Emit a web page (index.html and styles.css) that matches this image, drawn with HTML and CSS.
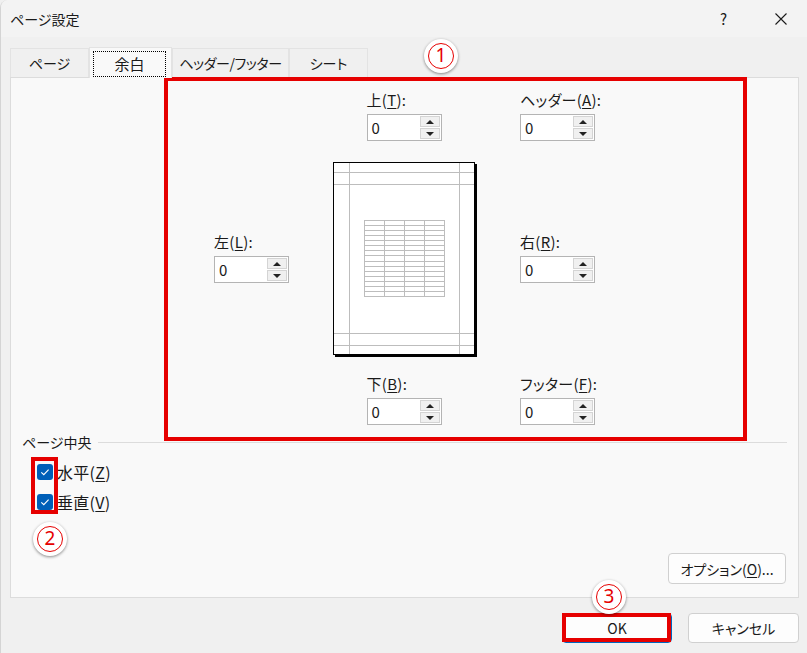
FILE: index.html
```html
<!DOCTYPE html>
<html lang="ja">
<head>
<meta charset="utf-8">
<title>ページ設定</title>
<link rel="stylesheet" href="styles.css">
</head>
<body>
<div class="window">
  <div class="titlebar">
    <span class="title">ページ設定</span>
    <span class="help">?</span>
    <span class="close"><svg width="12" height="12" viewBox="0 0 12 12"><path d="M0.5 0.5 L11.5 11.5 M11.5 0.5 L0.5 11.5" stroke="#1a1a1a" stroke-width="1.1" fill="none"/></svg></span>
  </div>
  <div class="tabs">
    <div class="tab w79">ページ</div>
    <div class="tab active"><span class="focus">余白</span></div>
    <div class="tab w117">ヘッダー/フッター</div>
    <div class="tab w79">シート</div>
  </div>
  <div class="panel">
    <div class="margins">
      <div class="field c2 r1">
        <div class="flabel">上(<u>T</u>):</div>
        <div class="spin"><span class="val">0</span><span class="btns"><span class="sb"><i class="up"></i></span><span class="sb"><i class="down"></i></span></span></div>
      </div>
      <div class="field c4 r1">
        <div class="flabel">ヘッダー(<u>A</u>):</div>
        <div class="spin"><span class="val">0</span><span class="btns"><span class="sb"><i class="up"></i></span><span class="sb"><i class="down"></i></span></span></div>
      </div>
      <div class="field c1 r2 mid">
        <div class="flabel">左(<u>L</u>):</div>
        <div class="spin"><span class="val">0</span><span class="btns"><span class="sb"><i class="up"></i></span><span class="sb"><i class="down"></i></span></span></div>
      </div>
      <svg class="preview" width="144" height="195" viewBox="0 0 144 195">
        <rect x="2" y="2" width="142" height="193" fill="#000"/>
        <rect x="0.5" y="0.5" width="141" height="192" fill="#fff" stroke="#000"/>
        <g stroke="#bdbdbd" fill="none" stroke-width="1">
          <line x1="16.5" y1="1" x2="16.5" y2="192"/>
          <line x1="126.5" y1="1" x2="126.5" y2="192"/>
          <line x1="1" y1="10.5" x2="141" y2="10.5"/>
          <line x1="1" y1="22.5" x2="141" y2="22.5"/>
          <line x1="1" y1="171.5" x2="141" y2="171.5"/>
          <line x1="1" y1="183.5" x2="141" y2="183.5"/>
          <rect x="31.5" y="58.5" width="80" height="76"/>
          <line x1="51.5" y1="58.5" x2="51.5" y2="134.5"/>
          <line x1="71.5" y1="58.5" x2="71.5" y2="134.5"/>
          <line x1="91.5" y1="58.5" x2="91.5" y2="134.5"/>
          <line x1="31.5" y1="63.5" x2="111.5" y2="63.5"/>
          <line x1="31.5" y1="68.5" x2="111.5" y2="68.5"/>
          <line x1="31.5" y1="73.5" x2="111.5" y2="73.5"/>
          <line x1="31.5" y1="78.5" x2="111.5" y2="78.5"/>
          <line x1="31.5" y1="83.5" x2="111.5" y2="83.5"/>
          <line x1="31.5" y1="88.5" x2="111.5" y2="88.5"/>
          <line x1="31.5" y1="93.5" x2="111.5" y2="93.5"/>
          <line x1="31.5" y1="99.5" x2="111.5" y2="99.5"/>
          <line x1="31.5" y1="104.5" x2="111.5" y2="104.5"/>
          <line x1="31.5" y1="109.5" x2="111.5" y2="109.5"/>
          <line x1="31.5" y1="114.5" x2="111.5" y2="114.5"/>
          <line x1="31.5" y1="119.5" x2="111.5" y2="119.5"/>
          <line x1="31.5" y1="124.5" x2="111.5" y2="124.5"/>
          <line x1="31.5" y1="129.5" x2="111.5" y2="129.5"/>
        </g>
      </svg>
      <div class="field c4 r2 mid">
        <div class="flabel">右(<u>R</u>):</div>
        <div class="spin"><span class="val">0</span><span class="btns"><span class="sb"><i class="up"></i></span><span class="sb"><i class="down"></i></span></span></div>
      </div>
      <div class="field c2 r3">
        <div class="flabel">下(<u>B</u>):</div>
        <div class="spin"><span class="val">0</span><span class="btns"><span class="sb"><i class="up"></i></span><span class="sb"><i class="down"></i></span></span></div>
      </div>
      <div class="field c4 r3">
        <div class="flabel">フッター(<u>F</u>):</div>
        <div class="spin"><span class="val">0</span><span class="btns"><span class="sb"><i class="up"></i></span><span class="sb"><i class="down"></i></span></span></div>
      </div>
    </div>
    <div class="group">
      <div class="group-head"><span>ページ中央</span><span class="rule"></span></div>
      <div class="check"><span class="box"><svg width="16" height="16" viewBox="0 0 16 16"><rect width="16" height="16" rx="3" fill="#005fb8"/><path d="M4.3 8.3 L6.8 10.7 L11.6 5.6" stroke="#fff" stroke-width="1.1" fill="none"/></svg></span><span>水平(<u>Z</u>)</span></div>
      <div class="check"><span class="box"><svg width="16" height="16" viewBox="0 0 16 16"><rect width="16" height="16" rx="3" fill="#005fb8"/><path d="M4.3 8.3 L6.8 10.7 L11.6 5.6" stroke="#fff" stroke-width="1.1" fill="none"/></svg></span><span>垂直(<u>V</u>)</span></div>
    </div>
    <div class="options-row"><button class="btn options">オプション(<u>O</u>)...</button></div>
  </div>
  <div class="footer">
    <button class="btn default">OK</button>
    <button class="btn cancel">キャンセル</button>
  </div>

  <div class="mark box1"></div>
  <div class="mark box2"></div>
  <div class="mark box3"></div>
  <div class="num n1"><span>1</span></div>
  <div class="num n2"><span>2</span></div>
  <div class="num n3"><span>3</span></div>
</div>
</body>
</html>
```

FILE: styles.css
```css
* { box-sizing: border-box; }
html, body { margin: 0; padding: 0; }
body {
  background: #f0f0f0;
  font-family: "Noto Sans CJK JP", "Noto Sans", sans-serif;
  font-feature-settings: "palt";
  color: #1a1a1a;
}
.window {
  position: relative;
  width: 807px;
  height: 653px;
  background: #f0f0f0;
  overflow: hidden;
  border-left: 1px solid #d4d4d4;
  border-top-left-radius: 8px;
}
.titlebar {
  height: 37px;
  background: #f3f3f3;
  display: flex;
  align-items: center;
  padding-left: 9px;
  font-size: 14px;
}
.title { flex: 1; line-height: 20px; }
.help { font-size: 15px; line-height: 20px; margin-right: 48px; }
.close { display: flex; width: 12px; height: 12px; margin-right: 20px; }

.tabs {
  height: 40px;
  display: flex;
  align-items: flex-end;
  margin-left: 9px;
  position: relative;
  z-index: 1;
}
.tab {
  height: 29px;
  border: 1px solid #e3e3e3;
  border-bottom: none;
  background: #f0f0f0;
  display: flex;
  align-items: center;
  justify-content: center;
  font-size: 14px;
  line-height: 20px;
}
.w79 { width: 79px; }
.w117 { width: 117px; letter-spacing: -0.4px; }
.tab.active {
  width: 83px;
  height: 31px;
  margin-bottom: -1px;
  background: #f9f9f9;
  padding: 3px 5px 1px 3px;
}
.focus {
  flex: 1;
  align-self: stretch;
  border: 1px dotted #000;
  display: flex;
  align-items: center;
  justify-content: center;
  font-size: 15px;
}

.panel {
  margin-left: 9px;
  width: 789px;
  height: 521px;
  background: #f9f9f9;
  border: 1px solid #dcdcdc;
  display: flex;
  flex-direction: column;
}
.margins {
  display: grid;
  grid-template-columns: 119px 142px 45px 75px;
  margin-left: 203px;
  margin-top: 12px;
}
.c1 { grid-column: 1; }
.c2 { grid-column: 2; justify-self: center; }
.c4 { grid-column: 4; }
.r1 { grid-row: 1; }
.r2 { grid-row: 2; }
.r3 { grid-row: 3; }
.mid { align-self: center; }
.preview {
  grid-column: 2;
  grid-row: 2;
  display: block;
  margin: 21px 0 17px 0;
}
.field { width: 75px; }
.flabel {
  font-size: 15px;
  line-height: 20px;
  height: 20px;
  margin-bottom: 4px;
  white-space: nowrap;
  letter-spacing: 0.3px;
}
u { text-decoration-thickness: 1px; text-underline-offset: 2px; }
.spin {
  height: 27px;
  border: 1px solid #b4b4b4;
  background: #fff;
  display: flex;
}
.val {
  flex: 1;
  font-size: 15px;
  line-height: 25px;
  padding-left: 4px;
}
.btns {
  width: 20px;
  display: flex;
  flex-direction: column;
  gap: 1px;
  margin: 1px 1px 1px 0;
}
.sb {
  flex: 1;
  background: #f0f0f0;
  border: 1px solid #d4d4d4;
  display: flex;
  align-items: center;
  justify-content: center;
}
.up, .down {
  width: 0;
  height: 0;
  border-left: 4px solid transparent;
  border-right: 4px solid transparent;
}
.up { border-bottom: 4px solid #222; }
.down { border-top: 4px solid #222; }

.group { padding-left: 11px; padding-right: 11px; margin-top: 7px; }
.group-head {
  display: flex;
  align-items: center;
  height: 20px;
  font-size: 14px;
  line-height: 20px;
}
.rule { flex: 1; height: 1px; background: #dcdcdc; margin-left: 7px; }
.check {
  display: flex;
  align-items: center;
  height: 30px;
  margin-left: 15px;
  font-size: 16px;
  line-height: 20px;
  letter-spacing: 0.3px;
}
.group-head + .check { margin-top: 5px; }
.box { display: flex; width: 16px; height: 16px; margin-right: 4px; }

.options-row {
  margin-top: auto;
  display: flex;
  justify-content: flex-end;
  padding: 0 12px 13px 0;
}
.btn {
  font-family: inherit;
  font-feature-settings: "palt";
  font-size: 14px;
  color: #1a1a1a;
  background: #fdfdfd;
  border: 1px solid #d0d0d0;
  border-radius: 4px;
  padding: 0;
  line-height: 20px;
}
.options { width: 118px; height: 31px; }
.footer {
  display: flex;
  justify-content: flex-end;
  gap: 16px;
  padding-top: 15px;
  padding-right: 8px;
}
.default { width: 110px; height: 30px; border-color: #0067c0; }
.cancel { width: 111px; height: 30px; }

.mark { position: absolute; border: 4px solid #e60000; }
.box1 { left: 163px; top: 77px; width: 583px; height: 364px; }
.box2 { left: 30px; top: 457px; width: 27px; height: 57px; }
.box3 { left: 561px; top: 613px; width: 109px; height: 29px; }

.num {
  position: absolute;
  width: 34px;
  height: 34px;
  border-radius: 50%;
  background: #fff;
  box-shadow: 0 1px 3px rgba(0,0,0,0.45);
  display: flex;
  align-items: center;
  justify-content: center;
}
.num span {
  width: 26px;
  height: 26px;
  border: 1.5px solid #e60000;
  border-radius: 50%;
  color: #e60000;
  font-family: "Noto Sans", sans-serif;
  font-size: 19px;
  line-height: 23px;
  text-align: center;
}
.n1 { left: 423px; top: 39px; }
.n2 { left: 32px; top: 522px; }
.n3 { left: 591px; top: 580px; }
```
